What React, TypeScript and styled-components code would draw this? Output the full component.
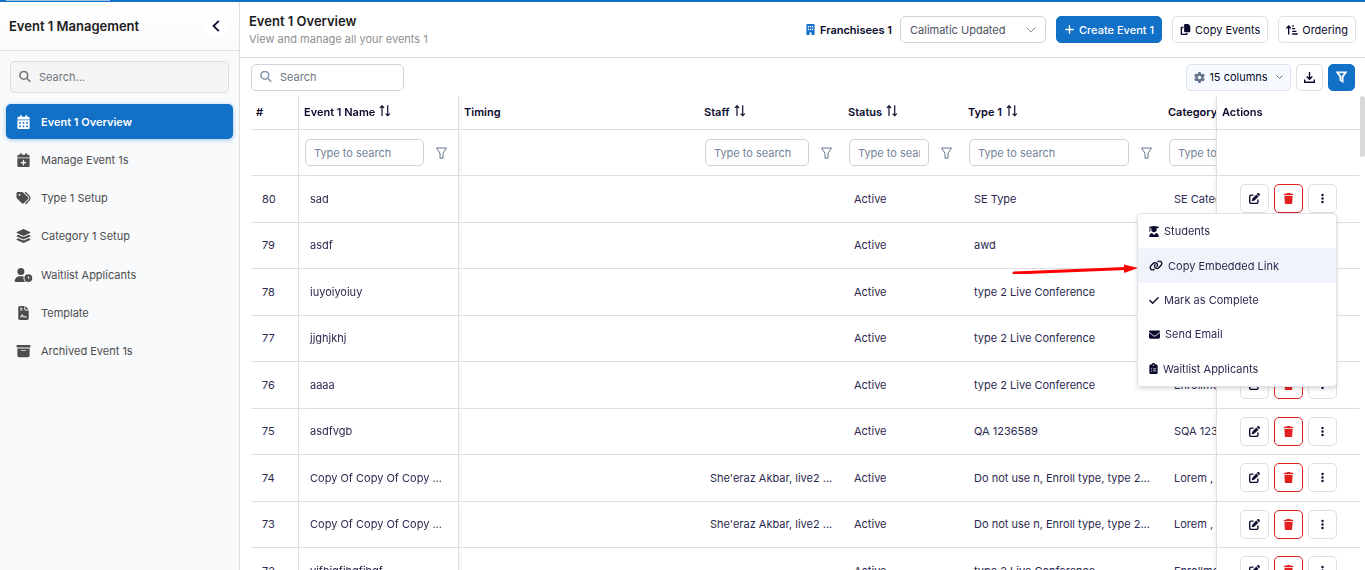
import React, { useState } from "react";
import styled, { createGlobalStyle, css } from "styled-components";
import {
  FaArrowUpShortWide,
  FaBoxArchive,
  FaBuilding,
  FaCalendarDays,
  FaCalendarPlus,
  FaCheck,
  FaClipboardList,
  FaCopy,
  FaEllipsisVertical,
  FaEnvelope,
  FaFileContract,
  FaGear,
  FaLayerGroup,
  FaLink,
  FaPenToSquare,
  FaPlus,
  FaTags,
  FaTrash,
  FaUserClock,
  FaUserGraduate,
} from "react-icons/fa6";
import type { IconType } from "react-icons";

const color = {
  brand: "#1270c7",
  ink: "#0a0a2e",
  body: "#2c2a50",
  muted: "#8f8f8f",
  line: "#dedfe1",
  field: "#d0d2de",
  slate: "#64748b",
  danger: "#e32020",
};

const GlobalStyle = createGlobalStyle`
  *, *::before, *::after { box-sizing: border-box; }
  body {
    margin: 0;
    overflow: hidden;
    background: #fff;
    color: ${color.ink};
    font-family: Inter, "Liberation Sans", sans-serif;
    font-size: 11px;
    line-height: 16px;
  }
  button, input, select { font: inherit; color: inherit; }
  button { cursor: pointer; }
  h1, h2, ul { margin: 0; padding: 0; }
  ul { list-style: none; }
`;

const Page = styled.div`
  display: flex;
  flex-direction: column;
  height: 100vh;
`;

const ProgressTrack = styled.div`
  flex: none;
  height: 2px;
  background: ${color.brand};
  padding-left: 6px;
`;

const ProgressBar = styled.div`
  width: 104px;
  height: 1px;
  background: #9cc4e8;
`;

const Body = styled.div`
  display: flex;
  flex: 1;
  min-height: 0;
`;

const Sidebar = styled.aside`
  flex: none;
  width: 240px;
  background: #f8fafc;
  border-right: 1px solid ${color.line};
`;

const SidebarHeader = styled.div`
  display: flex;
  align-items: center;
  justify-content: space-between;
  height: 49px;
  padding: 0 10px 0 9px;
  background: linear-gradient(#fff, #f9fafb);
  border-bottom: 1px solid ${color.line};
`;

const SidebarTitle = styled.h2`
  font-size: 13px;
  font-weight: 600;
  color: #1c1c22;
`;

const CollapseButton = styled.button`
  display: grid;
  place-items: center;
  width: 26px;
  height: 26px;
  padding: 0;
  border: 0;
  border-radius: 50%;
  background: #fff;
`;

const SearchBox = styled.label<{ $filled?: boolean }>`
  display: flex;
  align-items: center;
  gap: 8px;
  height: ${(p) => (p.$filled ? 32 : 27)}px;
  padding: 0 8px;
  border: 1px solid ${(p) => (p.$filled ? "#dcdcdc" : color.field)};
  border-radius: 5px;
  background: ${(p) => (p.$filled ? "#f5f5f5" : "#fff")};
  color: ${(p) => (p.$filled ? "#757575" : "#8a97ab")};

  svg { flex: none; }
`;

const SearchInput = styled.input`
  flex: 1;
  min-width: 0;
  padding: 0;
  border: 0;
  outline: 0;
  background: transparent;

  &::placeholder { color: #6f7780; opacity: 1; }
`;

const SidebarSearch = styled.div`
  padding: 10px 10px 0;
`;

const NavList = styled.ul`
  display: flex;
  flex-direction: column;
  justify-content: space-between;
  height: 265px;
  margin-top: 11px;
  padding: 0 6px;
`;

const NavLink = styled.a<{ $active?: boolean }>`
  display: flex;
  align-items: center;
  gap: 8px;
  height: 35px;
  padding: 0 8px;
  border-radius: 5px;
  color: #4d4d4d;
  text-decoration: none;

  svg { flex: none; width: 19px; height: 14px; }

  ${(p) =>
    p.$active &&
    css`
      background: ${color.brand};
      color: #fff;
      font-weight: 600;
      box-shadow: 0 1px 4px #1270c766;
    `}
`;

const Main = styled.main`
  display: flex;
  flex-direction: column;
  flex: 1;
  min-width: 0;
`;

const PageHeader = styled.header`
  display: flex;
  align-items: center;
  justify-content: space-between;
  flex: none;
  height: 56px;
  padding: 0 9px;
  border-bottom: 1px solid ${color.line};
`;

const PageTitle = styled.h1`
  font-size: 13px;
  line-height: 18px;
  font-weight: 600;
  color: #1c1c22;
`;

const PageSubtitle = styled.div`
  line-height: 18px;
  color: ${color.muted};
`;

const HeaderActions = styled.div`
  display: flex;
  align-items: center;
  gap: 10px;
`;

const FranchiseField = styled.div`
  display: flex;
  align-items: center;
  gap: 8px;
`;

const FranchiseLabel = styled.label`
  display: flex;
  align-items: center;
  gap: 4px;
  font-weight: 600;

  svg { color: ${color.brand}; }
`;

const SelectBox = styled.div`
  display: grid;
  align-items: center;
  width: 146px;

  > * { grid-area: 1 / 1; }
  > svg { justify-self: end; margin-right: 10px; color: #8c93a3; pointer-events: none; }
`;

const Select = styled.select`
  appearance: none;
  width: 100%;
  height: 27px;
  padding: 0 28px 0 9px;
  border: 1px solid ${color.field};
  border-radius: 5px;
  background: #fff;
  color: #4c5160;
`;

const Button = styled.button<{ $primary?: boolean }>`
  display: flex;
  align-items: center;
  justify-content: center;
  gap: 4px;
  height: 27px;
  padding: 0 7px;
  border: 1px solid ${(p) => (p.$primary ? color.brand : color.line)};
  border-radius: 5px;
  background: ${(p) => (p.$primary ? color.brand : "#fff")};
  color: ${(p) => (p.$primary ? "#fff" : color.ink)};
  font-weight: ${(p) => (p.$primary ? 500 : 400)};
  white-space: nowrap;
`;

const ColumnsButton = styled(Button)`
  width: 105px;
  background: #f7faff;
  border-color: #dce3ee;

  svg { color: ${color.slate}; }
  svg:last-child { margin-left: 4px; }
`;

const ToolButton = styled(Button)`
  width: 27px;
  padding: 0;
`;

const Toolbar = styled.div`
  display: flex;
  align-items: center;
  justify-content: space-between;
  flex: none;
  height: 38px;
  padding: 0 10px 0 11px;
`;

const ToolbarSearch = styled.div`
  width: 153px;
`;

const ToolGroup = styled.div`
  display: flex;
  gap: 5px;
`;

const TableArea = styled.div`
  display: flex;
  flex: 1;
  min-height: 0;
  padding-left: 11px;
`;

const TableScroller = styled.div`
  flex: 1;
  min-width: 0;
  overflow: auto;
  scrollbar-width: none;
`;

const ScrollRail = styled.div`
  flex: none;
  width: 5px;
`;

const ScrollThumb = styled.div`
  height: 61px;
  border-radius: 3px;
  background: #dadada;
`;

const Table = styled.table`
  width: 100%;
  min-width: 1256px;
  table-layout: fixed;
  border-collapse: separate;
  border-spacing: 0;
`;

const Col = styled.col<{ $width: number }>`
  width: ${(p) => p.$width}px;
`;

type CellProps = { $pin?: "index" | "name" | "actions"; $raised?: boolean };

const cellStyle = css<CellProps>`
  padding: 0 0 0 6px;
  border-bottom: 1px solid ${color.line};
  background: #fff;
  text-align: left;
  white-space: nowrap;

  ${(p) =>
    p.$pin &&
    css`
      position: sticky;
      z-index: ${p.$raised ? 3 : 1};
    `}
  ${(p) => p.$pin === "index" && css`left: 0; border-right: 1px solid ${color.line};`}
  ${(p) =>
    p.$pin === "name" &&
    css`
      left: 48px;
      border-right: 1px solid ${color.line};
      box-shadow: 3px 0 4px -2px #00000014;
    `}
  ${(p) =>
    p.$pin === "actions" &&
    css`
      right: 0;
      border-left: 1px solid ${color.line};
      box-shadow: -3px 0 4px -2px #00000014;
    `}
`;

const HeadCell = styled.th<CellProps>`
  ${cellStyle}
  height: 34px;
  padding: 0 0 2px 5px;
  font-weight: 600;
`;

const FilterCell = styled.td<CellProps>`
  ${cellStyle}
  height: 46px;
`;

const DataCell = styled.td<CellProps>`
  ${cellStyle}
  padding: 0 0 1px 11px;
  color: ${color.body};
`;

const ActionCell = styled(DataCell)`
  padding: 0 0 1px;
`;

const DataRow = styled.tr`
  height: 46px;

  &:nth-child(odd) { height: 47px; }
`;

const HeadLabel = styled.span`
  display: flex;
  align-items: center;
  gap: 4px;
`;

const FilterBox = styled.div`
  display: flex;
  align-items: center;
  gap: 12px;
  padding-right: 11px;
`;

const FilterInput = styled.input`
  flex: 1;
  min-width: 0;
  height: 27px;
  padding: 0 8px;
  border: 1px solid ${color.field};
  border-radius: 5px;
  background: #fff;

  &::placeholder { color: #74839a; opacity: 1; }
`;

const FilterButton = styled.button`
  display: grid;
  place-items: center;
  width: 11px;
  padding: 0;
  border: 0;
  background: none;
  color: ${color.slate};
`;

const RowActions = styled.div`
  display: flex;
  justify-content: center;
  gap: 5px;
`;

const IconButton = styled.button<{ $danger?: boolean }>`
  display: grid;
  place-items: center;
  width: 29px;
  height: 29px;
  padding: 0;
  border: 1px solid ${(p) => (p.$danger ? color.danger : color.line)};
  border-radius: 5px;
  background: #fff;
  color: ${(p) => (p.$danger ? color.danger : color.ink)};
`;

const MenuAnchor = styled.div`
  position: relative;
`;

const Menu = styled.ul`
  position: absolute;
  top: 100%;
  right: 0;
  display: flex;
  flex-direction: column;
  width: 200px;
  height: 174px;
  border: 1px solid #dfe4ec;
  border-radius: 4px;
  background: #fff;
  box-shadow: 0 2px 4px #00000024;
`;

const MenuItem = styled.li`
  position: relative;
  display: flex;
  flex: 1;
`;

const MenuButton = styled.button<{ $current?: boolean; $icon: number }>`
  display: flex;
  align-items: center;
  gap: 5px;
  width: 100%;
  padding: 0 11px;
  border: 0;
  background: ${(p) => (p.$current ? "#f0f3f9" : "none")};
  color: ${color.body};

  svg { width: ${(p) => p.$icon}px; height: 11px; color: ${color.ink}; }
`;

const Pointer = styled.svg`
  position: absolute;
  top: 14px;
  right: 100%;
  pointer-events: none;
`;

const SearchIcon = () => (
  <svg width="12" height="12" viewBox="0 0 12 12" fill="none" stroke="currentColor" strokeWidth="1.6">
    <circle cx="4.8" cy="4.3" r="3.9" />
    <path d="M7.7 7.2 11.3 10.8" />
  </svg>
);

const ChevronLeft = () => (
  <svg width="8" height="12" viewBox="0 0 8 12" fill="none" stroke="currentColor" strokeWidth="1.8">
    <path d="M6.8 0.8 1.5 6l5.3 5.2" />
  </svg>
);

const ChevronDown = ({ width }: { width: number }) => (
  <svg width={width} height={width / 2 + 1} viewBox={`0 0 ${width} ${width / 2 + 1}`} fill="none" stroke="currentColor">
    <path d={`M0.5 0.5 ${width / 2} ${width / 2} ${width - 0.5} 0.5`} />
  </svg>
);

const SortIcon = () => (
  <svg width="12" height="14" viewBox="0 0 12 14" fill="none" stroke="currentColor" strokeWidth="1.2">
    <path d="M3 11V0.8M0.9 2.9 3 0.8l2.1 2.1M8.7 0.3V10.7M6.6 8.6 8.7 10.7 10.8 8.6" />
  </svg>
);

const FunnelOutline = () => (
  <svg width="11" height="12" viewBox="0 0 11 12" fill="none" stroke="currentColor">
    <path d="M0.5 1H10.5L7 6.2V11.2H4V6.2Z" />
  </svg>
);

const FunnelBold = () => (
  <svg width="11" height="12" viewBox="0 0 11 12" fill="none" stroke="currentColor" strokeWidth="1.8">
    <path d="M1.2 1.4H9.8L6.6 5.6V10.4L4.4 9V5.6Z" />
  </svg>
);

const DownloadIcon = () => (
  <svg width="11" height="11" viewBox="0 0 11 11" fill="none" stroke="currentColor" strokeWidth="1.4">
    <path d="M5.5 0V7M2.7 4.4 5.5 7.2 8.3 4.4M0.7 7.4V10.3H10.3V7.4" />
  </svg>
);

const navItems: { label: string; icon: IconType }[] = [
  { label: "Event 1 Overview", icon: FaCalendarDays },
  { label: "Manage Event 1s", icon: FaCalendarPlus },
  { label: "Type 1 Setup", icon: FaTags },
  { label: "Category 1 Setup", icon: FaLayerGroup },
  { label: "Waitlist Applicants", icon: FaUserClock },
  { label: "Template", icon: FaFileContract },
  { label: "Archived Event 1s", icon: FaBoxArchive },
];

const menuItems: { label: string; icon: IconType; width: number }[] = [
  { label: "Students", icon: FaUserGraduate, width: 10 },
  { label: "Copy Embedded Link", icon: FaLink, width: 14 },
  { label: "Mark as Complete", icon: FaCheck, width: 10 },
  { label: "Send Email", icon: FaEnvelope, width: 11 },
  { label: "Waitlist Applicants", icon: FaClipboardList, width: 9 },
];

type Column = { label: string; width: number; sortable?: boolean; pin?: CellProps["$pin"] };

const columns: Column[] = [
  { label: "#", width: 48, pin: "index" },
  { label: "Event 1 Name", width: 160, sortable: true, pin: "name" },
  { label: "Timing", width: 240 },
  { label: "Staff", width: 144, sortable: true },
  { label: "Status", width: 120, sortable: true },
  { label: "Type 1", width: 200, sortable: true },
  { label: "Category 1", width: 200, sortable: true },
  { label: "Actions", width: 144, pin: "actions" },
];

type EventRow = { id: number; name: string; staff?: string; type: string; category: string };

const rows: EventRow[] = [
  { id: 80, name: "sad", type: "SE Type", category: "SE Category" },
  { id: 79, name: "asdf", type: "awd", category: "" },
  { id: 78, name: "iuyoiyoiuy", type: "type 2 Live Conference", category: "" },
  { id: 77, name: "jjghjkhj", type: "type 2 Live Conference", category: "" },
  { id: 76, name: "aaaa", type: "type 2 Live Conference", category: "Enrollment" },
  { id: 75, name: "asdfvgb", type: "QA 1236589", category: "SQA 12365" },
  { id: 74, name: "Copy Of Copy Of Copy ...", staff: "She'eraz Akbar, live2 ...", type: "Do not use n, Enroll type, type 2...", category: "Lorem ," },
  { id: 73, name: "Copy Of Copy Of Copy ...", staff: "She'eraz Akbar, live2 ...", type: "Do not use n, Enroll type, type 2...", category: "Lorem ," },
  { id: 72, name: "yjfhjgfjhgfjhgf", type: "type 2 Live Conference", category: "Enrollment" },
];

function RowMenu() {
  return (
    <Menu>
      {menuItems.map(({ label, icon: Icon, width }) => {
        const current = label === "Copy Embedded Link";
        return (
          <MenuItem key={label}>
            <MenuButton type="button" $current={current} $icon={width}>
              <Icon />
              {label}
            </MenuButton>
            {current && (
              <Pointer width="126" height="12" viewBox="0 0 126 12" aria-hidden="true">
                <path d="M2 11 114 6.5" stroke="#f00" strokeWidth="3" strokeLinecap="round" />
                <path d="M112 2.5 126 6 112 11Z" fill="#f00" />
              </Pointer>
            )}
          </MenuItem>
        );
      })}
    </Menu>
  );
}

function EventsTable() {
  const [openRow, setOpenRow] = useState<number | null>(80);

  return (
    <Table>
      <colgroup>
        {columns.map((c) => (
          <Col key={c.label} $width={c.width} />
        ))}
      </colgroup>
      <thead>
        <tr>
          {columns.map((c) => (
            <HeadCell key={c.label} scope="col" $pin={c.pin}>
              <HeadLabel>
                {c.label}
                {c.sortable && <SortIcon />}
              </HeadLabel>
            </HeadCell>
          ))}
        </tr>
        <tr>
          {columns.map((c) => (
            <FilterCell key={c.label} $pin={c.pin}>
              {c.sortable && (
                <FilterBox>
                  <FilterInput placeholder="Type to search" aria-label={`Filter by ${c.label}`} />
                  <FilterButton type="button" aria-label={`${c.label} filter options`}>
                    <FunnelOutline />
                  </FilterButton>
                </FilterBox>
              )}
            </FilterCell>
          ))}
        </tr>
      </thead>
      <tbody>
        {rows.map((row) => (
          <DataRow key={row.id}>
            <DataCell $pin="index">{row.id}</DataCell>
            <DataCell $pin="name">{row.name}</DataCell>
            <DataCell />
            <DataCell>{row.staff}</DataCell>
            <DataCell>Active</DataCell>
            <DataCell>{row.type}</DataCell>
            <DataCell>{row.category}</DataCell>
            <ActionCell $pin="actions" $raised={openRow === row.id}>
              <RowActions>
                <IconButton type="button" aria-label="Edit">
                  <FaPenToSquare size={11} />
                </IconButton>
                <IconButton type="button" $danger aria-label="Delete">
                  <FaTrash size={11} />
                </IconButton>
                <MenuAnchor>
                  <IconButton
                    type="button"
                    aria-label="More actions"
                    onClick={() => setOpenRow(openRow === row.id ? null : row.id)}
                  >
                    <FaEllipsisVertical size={11} />
                  </IconButton>
                  {openRow === row.id && <RowMenu />}
                </MenuAnchor>
              </RowActions>
            </ActionCell>
          </DataRow>
        ))}
      </tbody>
    </Table>
  );
}

export default function App() {
  return (
    <Page>
      <GlobalStyle />
      <ProgressTrack>
        <ProgressBar />
      </ProgressTrack>
      <Body>
        <Sidebar>
          <SidebarHeader>
            <SidebarTitle>Event 1 Management</SidebarTitle>
            <CollapseButton type="button" aria-label="Collapse sidebar">
              <ChevronLeft />
            </CollapseButton>
          </SidebarHeader>
          <SidebarSearch>
            <SearchBox $filled>
              <SearchIcon />
              <SearchInput placeholder="Search..." aria-label="Search menu" />
            </SearchBox>
          </SidebarSearch>
          <nav>
            <NavList>
              {navItems.map(({ label, icon: Icon }, i) => (
                <li key={label}>
                  <NavLink href="#" $active={i === 0}>
                    <Icon />
                    {label}
                  </NavLink>
                </li>
              ))}
            </NavList>
          </nav>
        </Sidebar>
        <Main>
          <PageHeader>
            <div>
              <PageTitle>Event 1 Overview</PageTitle>
              <PageSubtitle>View and manage all your events 1</PageSubtitle>
            </div>
            <HeaderActions>
              <FranchiseField>
                <FranchiseLabel htmlFor="franchisee">
                  <FaBuilding size={11} />
                  Franchisees 1
                </FranchiseLabel>
                <SelectBox>
                  <Select id="franchisee" defaultValue="Calimatic Updated">
                    <option>Calimatic Updated</option>
                  </Select>
                  <ChevronDown width={10} />
                </SelectBox>
              </FranchiseField>
              <Button type="button" $primary>
                <FaPlus size={11} />
                Create Event 1
              </Button>
              <Button type="button">
                <FaCopy size={11} />
                Copy Events
              </Button>
              <Button type="button">
                <FaArrowUpShortWide size={12} />
                Ordering
              </Button>
            </HeaderActions>
          </PageHeader>
          <Toolbar>
            <ToolbarSearch>
              <SearchBox>
                <SearchIcon />
                <SearchInput placeholder="Search" aria-label="Search events" />
              </SearchBox>
            </ToolbarSearch>
            <ToolGroup>
              <ColumnsButton type="button">
                <FaGear size={11} />
                15 columns
                <ChevronDown width={7} />
              </ColumnsButton>
              <ToolButton type="button" aria-label="Download">
                <DownloadIcon />
              </ToolButton>
              <ToolButton type="button" $primary aria-label="Toggle filters">
                <FunnelBold />
              </ToolButton>
            </ToolGroup>
          </Toolbar>
          <TableArea>
            <TableScroller>
              <EventsTable />
            </TableScroller>
            <ScrollRail>
              <ScrollThumb />
            </ScrollRail>
          </TableArea>
        </Main>
      </Body>
    </Page>
  );
}
